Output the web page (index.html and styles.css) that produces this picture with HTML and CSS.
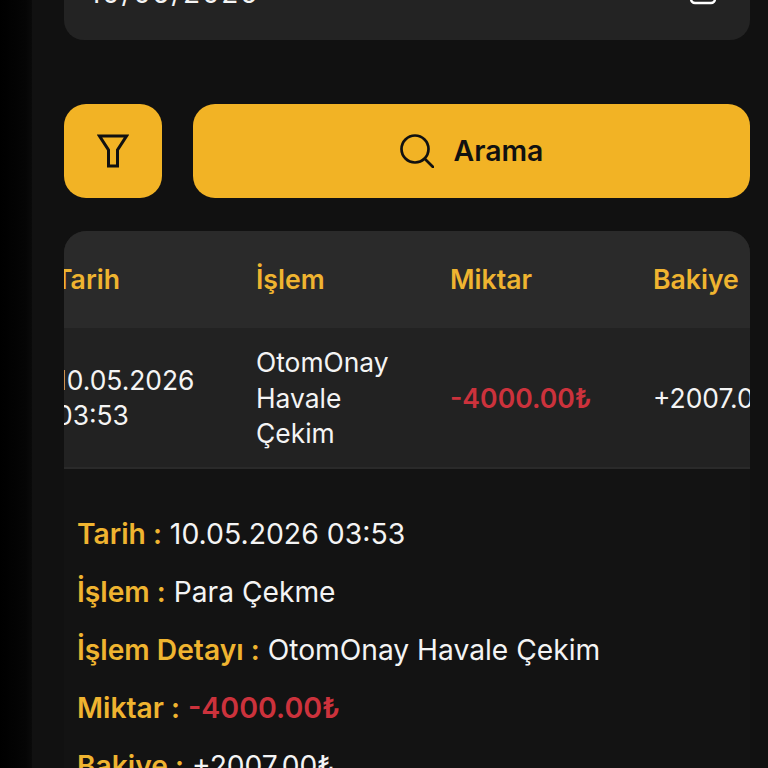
FILE: index.html
```html
<!DOCTYPE html>
<html lang="tr">
<head>
<meta charset="utf-8">
<title>Hesap Hareketleri</title>
<link rel="stylesheet" href="styles.css">
</head>
<body>
<div class="shell">
  <div class="rail"></div>
  <main class="content">
    <div class="date-field">
      <span class="date-value">10/05/2026</span>
      <svg class="cal-icon" viewBox="0 0 28 28" width="28" height="28" fill="none" stroke="#fff" stroke-width="2.4"><rect x="2" y="4" width="24" height="22" rx="4"/></svg>
    </div>
    <div class="actions">
      <button class="btn btn-filter" type="button" aria-label="Filtre">
        <svg viewBox="0 0 32 34" width="32" height="34" fill="none" stroke="#111" stroke-width="3" stroke-linejoin="miter"><path d="M2.5 2H29.5L20.5 16V32H11.5V16Z"/></svg>
      </button>
      <button class="btn btn-search" type="button">
        <svg viewBox="0 0 34 34" width="34" height="34" fill="none" stroke="#111" stroke-width="2.7" stroke-linecap="round"><circle cx="15" cy="15" r="13.5"/><path d="M25 25L33 33"/></svg>
        <span>Arama</span>
      </button>
    </div>
    <section class="table-card">
      <div class="tbl-row tbl-head">
        <div class="cell first">Tarih</div>
        <div class="cell">İşlem</div>
        <div class="cell">Miktar</div>
        <div class="cell">Bakiye</div>
      </div>
      <div class="tbl-row tbl-body">
        <div class="cell first date-cell">10.05.2026 03:53</div>
        <div class="cell name-cell">OtomOnay Havale Çekim</div>
        <div class="cell neg">-4000.00₺</div>
        <div class="cell nowrap">+2007.00₺</div>
      </div>
    </section>
    <section class="details">
      <p class="line"><b>Tarih :</b> <span class="stamp">10.05.2026 03:53</span></p>
      <p class="line"><b>İşlem :</b> Para Çekme</p>
      <p class="line"><b>İşlem Detayı :</b> OtomOnay Havale Çekim</p>
      <p class="line"><b>Miktar :</b> <span class="neg">-4000.00₺</span></p>
      <p class="line"><b>Bakiye :</b> +2007.00₺</p>
    </section>
  </main>
</div>
</body>
</html>
```
FILE: styles.css
```css
* { box-sizing: border-box; }
html, body { margin: 0; height: 768px; overflow: hidden; background: #111; }
body { font-family: Inter, "Liberation Sans", sans-serif; color: #f4f4f4; }
.shell { display: flex; height: 768px; overflow: hidden; }
.rail { width: 32px; flex: none; background: linear-gradient(90deg, #000 0, #050505 26px, #0a0a0a 32px); }
.content { width: 718px; padding-left: 32px; margin-top: -60px; flex: none; }
.date-field { height: 100px; background: #232323; border-radius: 20px; display: flex; justify-content: space-between; align-items: flex-start; padding: 36px 33px 0 25px; }
.date-value { font-size: 28px; line-height: 34px; letter-spacing: 1.7px; }
.cal-icon { margin-top: 1px; }
.actions { display: flex; gap: 31px; margin-top: 64px; }
.btn { height: 94px; border: 0; background: #f2b325; border-radius: 22px; display: flex; align-items: center; justify-content: center; font-family: inherit; color: #111; padding: 0 0 1px; }
.btn-filter { width: 98px; flex: none; }
.btn-search { flex: 1; gap: 20px; font-size: 28.4px; font-weight: 600; }
.table-card { margin-top: 33px; border-radius: 22px 22px 0 0; overflow: hidden; background: #222; }
.tbl-row { display: grid; grid-template-columns: 196px 194px 203px 120px; width: 720px; align-items: center; font-size: 26.6px; }
.tbl-head { height: 97px; background: #2a2a2a; color: #efb430; font-weight: 600; padding-bottom: 2px; }
.tbl-body { height: 140.5px; background: #222; line-height: 35.5px; border-bottom: 2px solid #2a2a2a; font-size: 26.4px; padding-top: 2px; }
.cell { margin-left: -4px; }
.cell.first { margin-left: -9px; }
.tbl-body .cell.first { margin-left: -8px; }
.date-cell { max-width: 150px; }
.name-cell { max-width: 150px; }
.nowrap { white-space: nowrap; }
.neg { color: #cc323c; font-weight: 600; }
.tbl-body .neg { font-size: 26.6px; }
.details { padding: 36px 13px 0; height: 400px; background: #131313; }
.line { margin: 0; height: 58px; line-height: 58px; font-size: 28.2px; white-space: nowrap; }
.line b { color: #efb430; font-weight: 600; }
.line .neg { font-size: 28.6px; }
.stamp { font-size: 28.4px; }
```
